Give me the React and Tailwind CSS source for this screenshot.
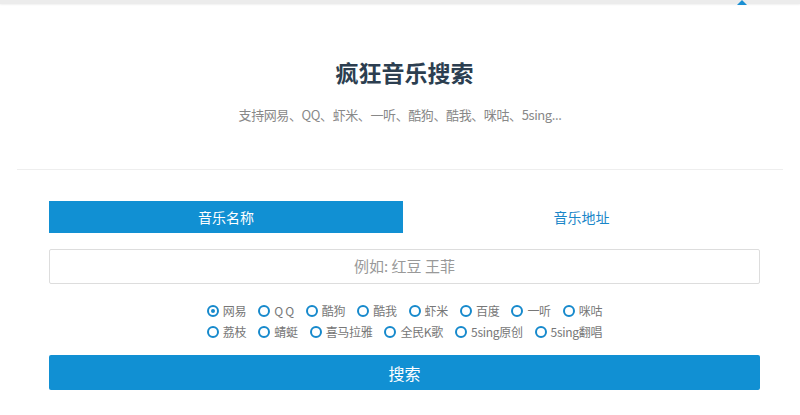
import React from "react";

const row1 = ["网易", "Q Q", "酷狗", "酷我", "虾米", "百度", "一听", "咪咕"];
const row2 = ["荔枝", "蜻蜓", "喜马拉雅", "全民K歌", "5sing原创", "5sing翻唱"];

function Radio({ label, checked }) {
  return (
    <label className="flex items-center mx-[6px]">
      <span className="w-[12px] h-[12px] rounded-full border-2 border-[#1689cc] flex items-center justify-center">
        {checked && <span className="w-[4px] h-[4px] rounded-full bg-[#1689cc]" />}
      </span>
      <span className="ml-[4px] text-[12px] tracking-[-0.3px] text-[#777] leading-[21px]">{label}</span>
    </label>
  );
}

export default function App() {
  return (
    <div className="w-[800px] h-[415px] bg-white overflow-hidden" style={{ fontFamily: '"Microsoft YaHei", "Noto Sans CJK SC", sans-serif' }}>
      <div className="relative h-[4px] bg-[#ececec] shadow-[0_1px_2px_rgba(0,0,0,0.06)]">
        <div className="absolute left-[737px] top-[0px] w-0 h-0 border-l-[5px] border-r-[5px] border-b-[5px] border-l-transparent border-r-transparent border-b-[#1a8fd3]" />
      </div>
      <div className="pt-[52px] flex flex-col items-center">
        <h1 className="ml-[9px] text-[23px] font-bold leading-[32px] text-[#2c3e50]">疯狂音乐搜索</h1>
        <p className="mt-[17px] text-[13px] tracking-[-0.4px] leading-[20px] text-[#888]">支持网易、QQ、虾米、一听、酷狗、酷我、咪咕、5sing...</p>
      </div>
      <div className="mt-[44px] mx-[17px] h-px bg-[#eeeeee]" />
      <div className="ml-[49px] w-[711px] mt-[31px]">
        <div className="flex h-[32px]">
          <div className="w-[354px] bg-[#1190d3] text-white text-[14px] flex items-center justify-center">音乐名称</div>
          <div className="flex-1 text-[#1a86c8] text-[14px] flex items-center justify-center">音乐地址</div>
        </div>
        <div className="mt-[16px] h-[35px] border border-[#dddddd] rounded-[2px] flex items-center justify-center text-[15px] text-[#999]">
          例如: 红豆 王菲
        </div>
        <div className="mt-[16px] flex flex-col items-center">
          <div className="flex">
            {row1.map((l, i) => (
              <Radio key={l} label={l} checked={i === 0} />
            ))}
          </div>
          <div className="flex">
            {row2.map((l) => (
              <Radio key={l} label={l} />
            ))}
          </div>
        </div>
        <div className="mt-[13px] h-[35px] bg-[#1190d3] rounded-[2px] text-white text-[16px] flex items-center justify-center">搜索</div>
      </div>
    </div>
  );
}
